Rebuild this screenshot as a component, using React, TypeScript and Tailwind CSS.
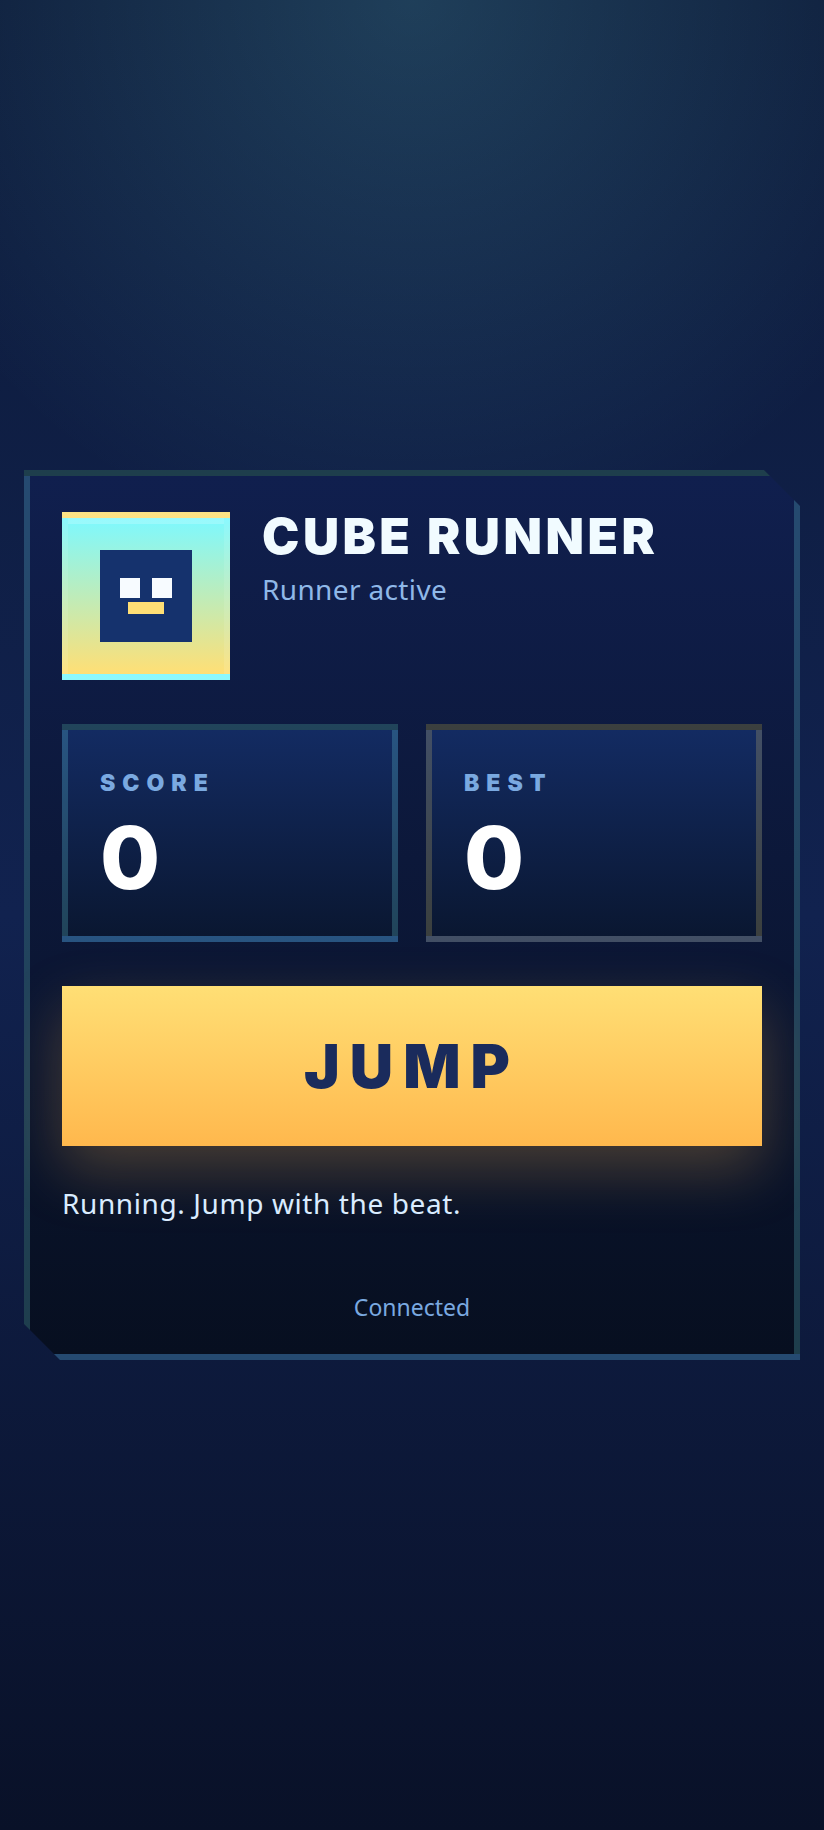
const body = '"Noto Sans", sans-serif';
const heavy = 'Inter, "Liberation Sans", sans-serif';

function StatCard({ label, value, border }: { label: string; value: string; border: string }) {
  return (
    <div
      className={`h-[218px] border-[6px] px-8 pt-[38px] bg-[linear-gradient(180deg,#132b62,#0a1731)] ${border}`}
    >
      <div className="text-[23px] leading-[30px] font-black tracking-[7px] text-[#7aa9e0]" style={{ fontFamily: heavy }}>
        {label}
      </div>
      <div className="mt-4 text-[87px] leading-[88px] font-extrabold text-white" style={{ fontFamily: heavy }}>
        {value}
      </div>
    </div>
  );
}

export default function App() {
  return (
    <div
      className="min-h-[1830px] flex items-center justify-center px-6 bg-[radial-gradient(circle_at_50%_0%,rgba(125,249,255,0.16),transparent_30%),linear-gradient(180deg,#0d1b3a,#11224f_50%,#091128)]"
      style={{ fontFamily: body }}
    >
      <div className="w-full h-[890px] border-[6px] border-[rgba(125,249,255,0.2)] px-8 pt-9 bg-[linear-gradient(180deg,#101f4e,#070f20)] [clip-path:polygon(0_0,calc(100%-36px)_0,100%_36px,100%_100%,36px_100%,0_calc(100%-36px))]">
        <div className="flex gap-8">
          <div className="w-[168px] h-[168px] shrink-0 flex items-center justify-center border-[6px] border-[rgba(255,255,255,0.1)] bg-[linear-gradient(180deg,#7df9ff,#ffdf75)] shadow-[inset_0_6px_0_rgba(255,255,255,0.2)]">
            <div className="w-[92px] h-[92px] bg-[#15326d] flex flex-col items-center pt-7">
              <div className="flex gap-3">
                <div className="w-5 h-5 bg-[#f7fbff]" />
                <div className="w-5 h-5 bg-[#f7fbff]" />
              </div>
              <div className="w-9 h-3 mt-1 bg-[#ffdf75]" />
            </div>
          </div>
          <div>
            <h1 className="text-[50px] leading-[48px] font-black text-[#f1fbff] tracking-[3.5px]" style={{ fontFamily: heavy }}>
              CUBE RUNNER
            </h1>
            <p className="mt-[11px] text-[28px] leading-9 tracking-[0.36px] text-[#8fb8e8]">Runner active</p>
          </div>
        </div>

        <div className="mt-11 grid grid-cols-2 gap-7">
          <StatCard label="SCORE" value="0" border="border-[rgba(125,249,255,0.2)]" />
          <StatCard label="BEST" value="0" border="border-[rgba(255,223,117,0.2)]" />
        </div>

        <button
          className="mt-11 w-full h-[160px] block text-center text-[60px] font-black tracking-[10px] text-[#1a2b5c] bg-[linear-gradient(180deg,#ffdf75,#ffb84d)] shadow-[0_24px_60px_rgba(255,184,77,0.26)]"
          style={{ fontFamily: heavy }}
        >
          JUMP
        </button>

        <p className="mt-[39px] text-[28px] leading-9 tracking-[0.6px] text-[#d9ecff]">Running. Jump with the beat.</p>
        <p className="mt-[70px] text-center text-[23px] leading-8 text-[#7aa9e0]">Connected</p>
      </div>
    </div>
  );
}
